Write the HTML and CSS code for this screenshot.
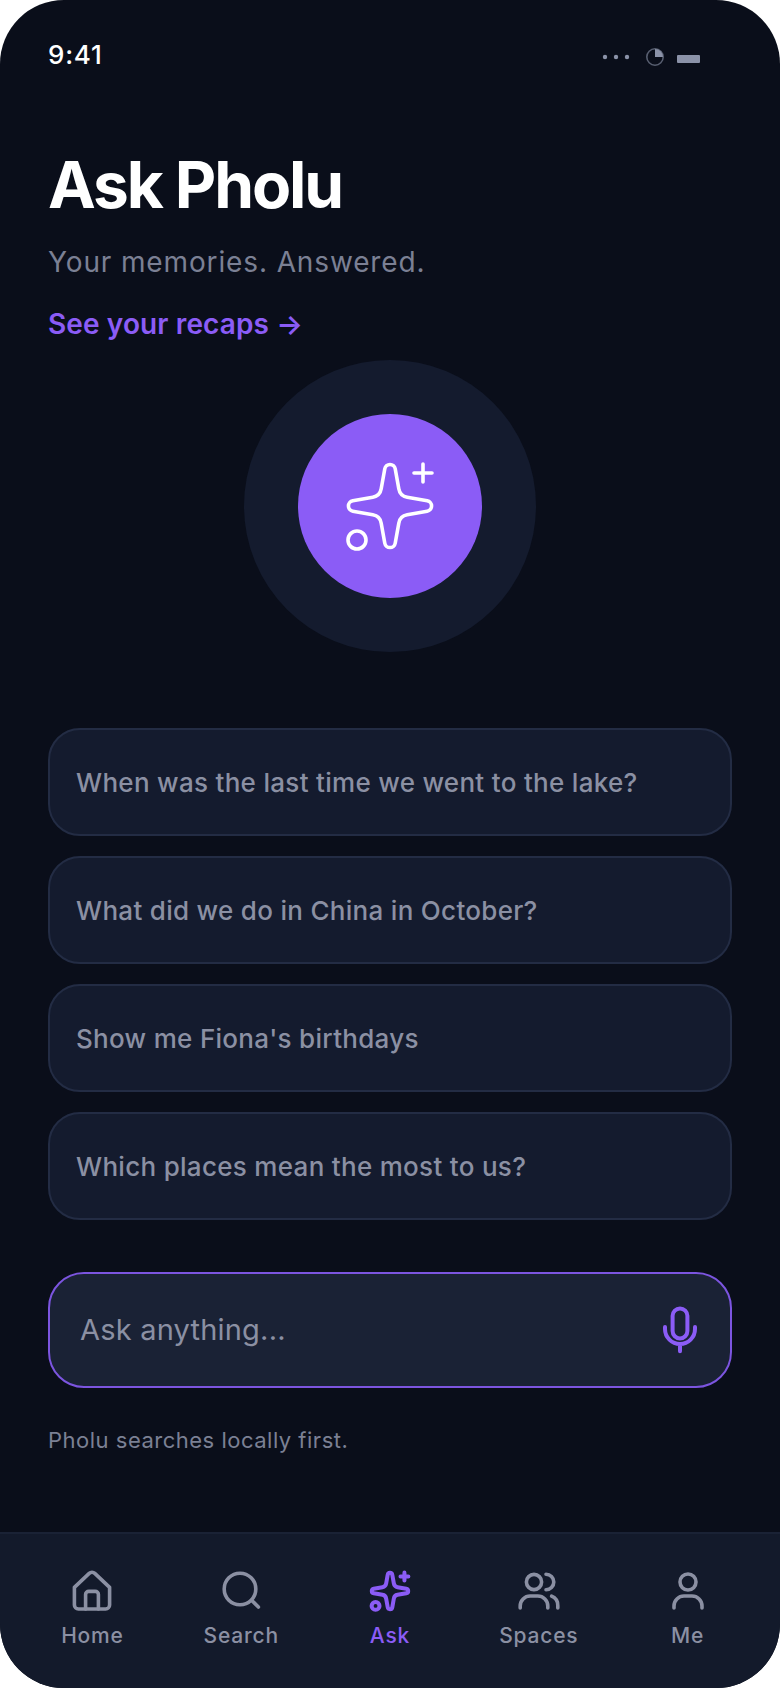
FILE: index.html
```html
<!DOCTYPE html>
<html lang="en">
<head>
<meta charset="utf-8">
<title>Ask Pholu</title>
<link rel="stylesheet" href="styles.css">
</head>
<body>
<svg class="defs" width="0" height="0" aria-hidden="true">
  <symbol id="sparkle" viewBox="0 0 24 24">
    <path d="M10.7 2.7a1.32 1.32 0 0 1 2.6 0l.9 5q.3 1.8 2.1 2.1l5 .9a1.32 1.32 0 0 1 0 2.6l-5 .9q-1.8.3-2.1 2.1l-.9 5a1.32 1.32 0 0 1-2.6 0l-.9-5q-.3-1.8-2.1-2.1l-5-.9a1.32 1.32 0 0 1 0-2.6l5-.9q1.8-.3 2.1-2.1z"/>
    <path d="M20.25 1.5v4.5M18 3.75h4.5"/>
    <circle cx="3.75" cy="20.5" r="2.25"/>
  </symbol>
</svg>
<div class="screen">
  <header class="status">
    <span class="time">9:41</span>
    <div class="status-icons">
      <svg class="dots" viewBox="0 0 28 6"><circle cx="3" cy="3" r="2.2"/><circle cx="14" cy="3" r="2.2"/><circle cx="25" cy="3" r="2.2"/></svg>
      <svg class="pie" viewBox="0 0 20 20"><circle cx="10" cy="10" r="8.2"/><path d="M10 2a8 8 0 0 1 8 8h-8z"/></svg>
      <span class="battery"></span>
    </div>
  </header>
  <main class="main">
    <h1 class="title">Ask Pholu</h1>
    <p class="subtitle">Your memories. Answered.</p>
    <a class="link" href="#">See your recaps →</a>
    <div class="hero">
      <div class="hero-inner">
        <svg class="icon-line hero-icon"><use href="#sparkle"/></svg>
      </div>
    </div>
    <div class="prompts">
      <div class="prompt">When was the last time we went to the lake?</div>
      <div class="prompt">What did we do in China in October?</div>
      <div class="prompt">Show me Fiona's birthdays</div>
      <div class="prompt">Which places mean the most to us?</div>
    </div>
    <div class="ask-box">
      <span class="ask-placeholder">Ask anything...</span>
      <svg class="tab-icon accent mic" viewBox="0 0 24 24"><rect x="8.3" y="1.2" width="7.4" height="15" rx="3.7"/><path d="M4.5 10.5v1a7.5 7.5 0 0 0 15 0v-1M12 19v3.6"/></svg>
    </div>
    <p class="note">Pholu searches locally first.</p>
  </main>
  <nav class="tabs">
    <div class="tab">
      <svg class="tab-icon" viewBox="0 0 24 24"><path d="M3.2 10.2 10.6 3.2a2 2 0 0 1 2.8 0l7.4 7v8.8a2 2 0 0 1-2 2H5.2a2 2 0 0 1-2-2z"/><path d="M8.8 21v-7.2a1.6 1.6 0 0 1 1.6-1.6h3.2a1.6 1.6 0 0 1 1.6 1.6V21"/></svg>
      <span>Home</span>
    </div>
    <div class="tab">
      <svg class="tab-icon" viewBox="0 0 24 24"><circle cx="11.5" cy="11" r="7.9"/><path d="M17.3 16.6 20.7 20"/></svg>
      <span>Search</span>
    </div>
    <div class="tab active">
      <svg class="tab-icon accent sparkle-tab"><use href="#sparkle"/></svg>
      <span>Ask</span>
    </div>
    <div class="tab">
      <svg class="tab-icon" viewBox="0 0 24 24"><circle cx="9.5" cy="7.5" r="3.8"/><path d="M15.5 3.6a3.9 3.9 0 0 1 0 7.8M2.6 20.5v-1a5 5 0 0 1 5-5h3.8a5 5 0 0 1 5 5v1M18.3 14.6a5 5 0 0 1 3.1 4.7v1.2"/></svg>
      <span>Spaces</span>
    </div>
    <div class="tab">
      <svg class="tab-icon" viewBox="0 0 24 24"><circle cx="12" cy="7.5" r="4"/><path d="M5 20.5v-1a5 5 0 0 1 5-5h4a5 5 0 0 1 5 5v1"/></svg>
      <span>Me</span>
    </div>
  </nav>
</div>
</body>
</html>
```
FILE: styles.css
```css
* { box-sizing: border-box; margin: 0; padding: 0; }
html, body { width: 780px; height: 1688px; background: #fff; overflow: hidden; }
body { font-family: Inter, "Liberation Sans", sans-serif; }
.defs { display: block; height: 0; }
.screen {
  width: 780px; height: 1688px; border-radius: 64px; overflow: hidden;
  background: #0a0e1a; display: flex; flex-direction: column;
}
.status {
  height: 110px; padding: 38px 80px 0 48px; display: flex;
  justify-content: space-between; align-items: flex-start; flex: none;
}
.time { font-size: 26px; line-height: 34px; font-weight: 500; color: #fff; letter-spacing: .8px; }
.status-icons { display: flex; align-items: center; gap: 12px; height: 38px; }
.dots { width: 28px; height: 6px; fill: #8b92a8; margin-right: 3px; }
.pie { width: 20px; height: 20px; }
.pie circle { fill: none; stroke: #8b92a8; stroke-width: 1.6; opacity: .6; }
.pie path { fill: #8b92a8; }
.battery { width: 23px; height: 8px; margin-top: 3px; border-radius: 1px; background: #8b92a8; }
.main { flex: 1; padding: 40px 48px 0; display: flex; flex-direction: column; }
.title { font-size: 64px; line-height: 70px; font-weight: 700; letter-spacing: -2.1px; color: #fff; }
.subtitle { margin-top: 22px; font-size: 28px; line-height: 40px; color: #7b8094; letter-spacing: .87px; }
.link { margin-top: 22px; font-size: 28px; line-height: 40px; font-weight: 600; color: #8b5cf6; text-decoration: none; letter-spacing: .12px; }
.hero {
  margin: 16px auto 0; width: 292px; height: 292px; border-radius: 50%;
  background: #141b2e; display: flex; align-items: center; justify-content: center;
}
.hero-inner {
  width: 184px; height: 184px; border-radius: 50%; background: #8b5cf6;
  display: flex; align-items: center; justify-content: center;
}
.icon-line, .tab-icon { fill: none; stroke-linecap: round; stroke-linejoin: round; }
.hero-icon { width: 96px; height: 96px; stroke: #fff; stroke-width: .9; }
.prompts { margin-top: 76px; display: flex; flex-direction: column; gap: 20px; }
.prompt {
  height: 108px; padding: 0 26px; display: flex; align-items: center;
  background: #141b2e; border: 2px solid #232c44; border-radius: 32px;
  font-size: 26px; font-weight: 500; color: #8b90a3; letter-spacing: .3px;
}
.ask-box {
  margin-top: 52px; height: 116px; padding: 0 26px 0 30px; display: flex;
  align-items: center; justify-content: space-between;
  background: #1a2235; border: 2px solid #7c55e0; border-radius: 36px;
}
.ask-placeholder { font-size: 29px; color: #8b90a3; letter-spacing: .2px; margin-bottom: 2px; }
.note { margin-top: 38px; font-size: 22px; line-height: 28px; color: #7b8094; letter-spacing: .5px; }
.tabs {
  flex: none; height: 156px; padding: 33px 18px 0; display: flex;
  background: #131a2b; border-top: 2px solid #1a2235;
}
.tab {
  flex: 1; display: flex; flex-direction: column; align-items: center; gap: 7px;
  font-size: 21px; line-height: 28px; font-weight: 500; color: #8b90a3; letter-spacing: .8px;
}
.tab-icon { width: 48px; height: 48px; stroke: #8b90a3; stroke-width: 1.8; display: block; }
.tab-icon.accent { stroke: #8b5cf6; }
.mic { stroke-width: 2; }
.sparkle-tab { width: 42px; height: 42px; margin: 3px; stroke-width: 2.3; }
.tab.active { color: #8b5cf6; }
```
